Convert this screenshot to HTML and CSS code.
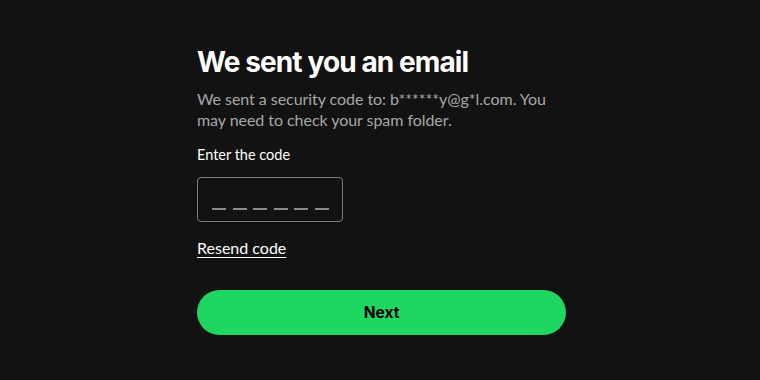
FILE: index.html
```html
<!DOCTYPE html>
<html lang="en">
<head>
<meta charset="utf-8">
<link rel="stylesheet" href="styles.css">
</head>
<body>
<main class="page">
  <section class="card">
    <h1 class="title">We sent you an email</h1>
    <p class="subtitle">We sent a security code to: b******y@g*l.com. You may need to check your spam folder.</p>
    <label class="label" for="code">Enter the code</label>
    <div class="code-box" id="code">
      <span class="dash"></span><span class="dash"></span><span class="dash"></span><span class="dash"></span><span class="dash"></span><span class="dash"></span>
    </div>
    <a class="resend" href="#">Resend code</a>
    <button class="next" type="button">Next</button>
  </section>
</main>
</body>
</html>
```
FILE: styles.css
```css
* { box-sizing: border-box; }
html, body { margin: 0; padding: 0; }
body {
  background: #121212;
  color: #fff;
  font-family: "Inter", "Liberation Sans", sans-serif;
  width: 760px;
  height: 380px;
  overflow: hidden;
}
.page {
  display: flex;
  justify-content: center;
  padding-top: 44px;
}
.card {
  width: 369px;
  margin-left: 3px;
  display: flex;
  flex-direction: column;
  align-items: flex-start;
}
.title {
  margin: 0;
  font-size: 28px;
  font-weight: 700;
  letter-spacing: -0.9px;
  line-height: 36px;
}
.subtitle {
  margin: 9px 0 0;
  font-family: "Lato", "Liberation Sans", sans-serif;
  font-size: 16px;
  line-height: 20.5px;
  color: #a7a7a7;
  font-weight: 400;
  letter-spacing: -0.05px;
}
.label {
  margin-top: 16px;
  font-family: "Lato", "Liberation Sans", sans-serif;
  font-size: 14.5px;
  line-height: 18px;
  font-weight: 400;
}
.code-box {
  margin-top: 13px;
  width: 146px;
  height: 45px;
  border: 1px solid #7c7c7c;
  border-radius: 4px;
  display: flex;
  align-items: flex-end;
  gap: 6.5px;
  padding: 0 0 11px 14px;
}
.dash {
  width: 14px;
  height: 2px;
  background: #8a8a8a;
}
.resend {
  margin-top: 16px;
  font-family: "Lato", "Liberation Sans", sans-serif;
  color: #fff;
  font-size: 16px;
  line-height: 20px;
  text-decoration: underline;
  text-underline-offset: 3px;
}
.next {
  margin-top: 32px;
  width: 369px;
  height: 45px;
  border: none;
  border-radius: 23px;
  background: #1ed760;
  color: #000;
  font-family: inherit;
  font-size: 15.5px;
  font-weight: 700;
}
```
